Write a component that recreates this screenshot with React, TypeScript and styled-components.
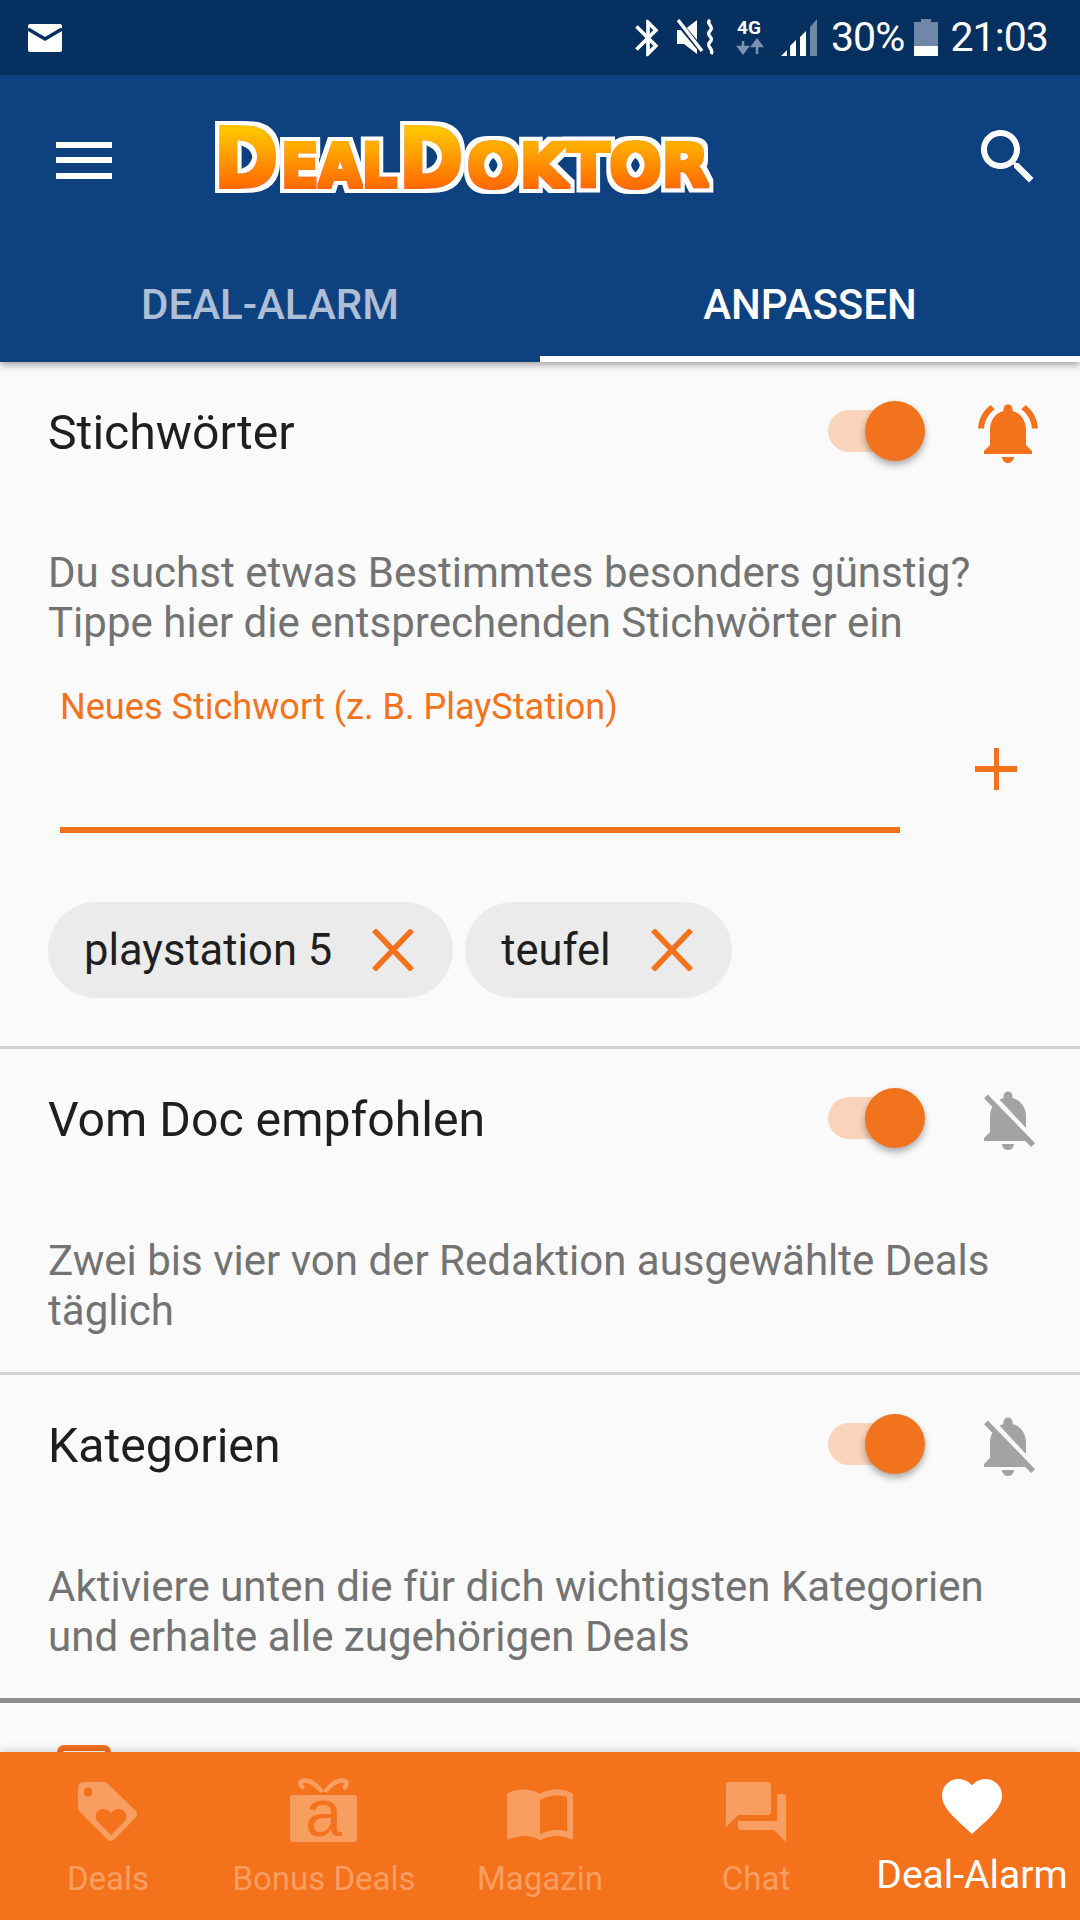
import React from "react";
import styled, { createGlobalStyle } from "styled-components";

const Global = createGlobalStyle`
  html, body { margin: 0; padding: 0; background: #fafafa; }
  * { box-sizing: border-box; }
  body { font-family: Roboto, "Noto Sans", sans-serif; }
`;

const ORANGE = "#f5721d";
const MUTED = "#f99e61";

const Page = styled.div`
  width: 1080px; height: 1920px; display: flex; flex-direction: column; overflow: hidden; background: #fafafa;
`;
const StatusBar = styled.div`
  height: 75px; flex: none; background: #06305f; display: flex; align-items: center; justify-content: space-between;
  padding: 0 32px 0 28px; color: #fff;
`;
const StatusIcons = styled.div`display: flex; align-items: center;`;
const StatusText = styled.span<{ $gap: number }>`
  font-size: 41px; line-height: 75px; letter-spacing: -0.9px; margin-left: ${p => p.$gap}px; display: block;
`;
const AppBar = styled.header`
  height: 287px; flex: none; background: #0e4180; display: flex; flex-direction: column;
  box-shadow: 0 3px 7px rgba(0,0,0,.35); position: relative; z-index: 2;
`;
const Toolbar = styled.div`
  height: 170px; flex: none; display: flex; align-items: center; padding: 0 36px 0 56px; color: #fff;
`;
const Burger = styled.div`
  width: 56px; height: 37px; flex: none; display: flex; flex-direction: column; justify-content: space-between;
  & > i { display: block; height: 6px; background: #fff; }
`;
const LogoWrap = styled.div`margin-left: 96px; flex: 1; display: flex;`;
const SearchWrap = styled.div`margin-top: -6px; flex: none;`;
const Tabs = styled.div`flex: 1; display: flex;`;
const Tab = styled.div<{ $active?: boolean }>`
  flex: 1; display: flex; align-items: center; justify-content: center; font-size: 42px; font-weight: 500;
  padding-top: 8px; color: ${p => (p.$active ? "#fff" : "#aebfd5")};
  border-bottom: 6px solid ${p => (p.$active ? "#fff" : "transparent")};
`;
const Content = styled.main`flex: 1; min-height: 0; overflow: hidden; background: #fafafa;`;
const Section = styled.section<{ $dark?: boolean; $top: number }>`
  padding: ${p => p.$top}px 0 0 48px;
  border-bottom: ${p => (p.$dark ? "5px solid #8e8e8e" : "3px solid #d3d3d3")};
`;
const Header = styled.div`display: flex; align-items: center; height: 72px; padding-right: 36px;`;
const Title = styled.h2`flex: 1; margin: 0; font-size: 48.2px; font-weight: 400; color: #1f1f1f; line-height: 72px;`;
const Switch = styled.div`
  width: 97px; height: 60px; position: relative; flex: none; margin-right: 47px; top: -2px;
  &::before { content: ""; position: absolute; left: 0; top: 9px; width: 84px; height: 42px; border-radius: 21px; background: #fad3bb; }
  &::after { content: ""; position: absolute; right: 0; top: 0; width: 60px; height: 60px; border-radius: 50%; background: #f1731d; box-shadow: 0 4px 7px rgba(0,0,0,.32); }
`;
const Body = styled.p<{ $top: number; $bottom: number }>`
  margin: ${p => p.$top}px 0 ${p => p.$bottom}px; font-size: 42.05px; line-height: 50px; color: #737373; white-space: nowrap;
`;
const InputRow = styled.div`display: flex; align-items: flex-end; padding-left: 12px; margin-top: 39px;`;
const Field = styled.div`
  width: 840px; height: 146px; border-bottom: 6px solid ${ORANGE}; color: ${ORANGE}; font-size: 36.1px; line-height: 40px;
`;
const Plus = styled.div`
  width: 42px; height: 42px; margin: 0 0 43px 75px; position: relative;
  &::before, &::after { content: ""; position: absolute; background: ${ORANGE}; }
  &::before { left: 0; right: 0; top: 18px; height: 6px; }
  &::after { top: 0; bottom: 0; left: 19px; width: 5px; }
`;
const Chips = styled.div`display: flex; gap: 12px; margin: 69px 0 48px 0;`;
const Chip = styled.div`
  height: 96px; border-radius: 48px; background: #ebebeb; display: flex; align-items: center; padding: 0 39px 0 36px; gap: 40px;
  font-size: 43.5px; color: #1f1f1f;
`;
const Stub = styled.div`
  margin: 42px 0 0 9px; width: 54px; height: 30px; border-radius: 7px; background: ${ORANGE};
  padding: 6px; & > i { display: block; height: 1px; background: #fff; }
`;
const BottomNav = styled.nav`
  height: 168px; flex: none; background: ${ORANGE}; display: grid; grid-template-columns: repeat(5, 216px);
  box-shadow: 0 -3px 8px rgba(0,0,0,.13); position: relative; z-index: 2;
`;
const NavItem = styled.div<{ $active?: boolean; $iconTop: number }>`
  position: relative; display: flex; flex-direction: column; align-items: center; padding-top: ${p => p.$iconTop}px;
  color: ${p => (p.$active ? "#fff" : MUTED)}; white-space: nowrap;
`;
const NavLabel = styled.span<{ $active?: boolean }>`
  position: absolute; left: -20px; right: -20px; text-align: center;
  top: ${p => (p.$active ? "103px" : "107px")};
  font-size: ${p => (p.$active ? "39px" : "33px")}; line-height: 40px;
`;

const Icon = ({ d, size = 72, color = "currentColor" }: { d: string; size?: number; color?: string }) => (
  <svg width={size} height={size} viewBox="0 0 24 24" fill={color} style={{ display: "block", flex: "none" }}><path d={d} /></svg>
);

const BELL_ON = "M7.58 4.08L6.15 2.65C3.75 4.48 2.17 7.3 2.03 10.5h2c.15-2.65 1.51-4.97 3.55-6.42zm12.39 6.42h2c-.15-3.2-1.73-6.02-4.12-7.85l-1.42 1.43c2.02 1.45 3.39 3.77 3.54 6.42zM18 11c0-3.07-1.64-5.64-4.5-6.32V4c0-.83-.67-1.5-1.5-1.5s-1.5.67-1.5 1.5v.68C7.63 5.36 6 7.92 6 11v5l-2 2v1h16v-1l-2-2v-5zm-6 11c.14 0 .27-.01.4-.04.65-.14 1.18-.58 1.44-1.18.1-.24.15-.5.15-.78h-4c.01 1.1.9 2 2.01 2z";
const BELL_OFF = "M20 18.69L7.84 6.14 5.27 3.49 4 4.76l2.8 2.8v.01c-.52.99-.8 2.16-.8 3.42v5l-2 2v1h13.73l2 2L21 19.72l-1-1.03zM12 22c1.11 0 2-.89 2-2h-4c0 1.11.89 2 2 2zm6-7.32V11c0-3.08-1.64-5.64-4.5-6.32V4c0-.83-.67-1.5-1.5-1.5s-1.5.67-1.5 1.5v.68c-.15.03-.29.08-.42.12-.1.03-.2.07-.3.11h-.01c-.2.08-.4.17-.59.27-.01 0-.01.01-.02.01L18 14.68z";
const SEARCH = "M15.5 14h-.79l-.28-.27C15.41 12.59 16 11.11 16 9.5 16 5.91 13.09 3 9.5 3S3 5.91 3 9.5 5.91 16 9.5 16c1.61 0 3.09-.59 4.23-1.57l.27.28v.79l5 4.99L20.49 19l-4.99-5zm-6 0C7.01 14 5 11.99 5 9.5S7.01 5 9.5 5 14 7.01 14 9.5 11.99 14 9.5 14z";
const HEART = "M12 21.35l-1.45-1.32C5.4 15.36 2 12.28 2 8.5 2 5.42 4.42 3 7.5 3c1.74 0 3.41.81 4.5 2.09C13.09 3.81 14.76 3 16.5 3 19.58 3 22 5.42 22 8.5c0 3.78-3.4 6.86-8.55 11.54L12 21.35z";
const BOOK = "M21 5c-1.11-.35-2.33-.5-3.5-.5-1.95 0-4.05.4-5.5 1.5-1.45-1.1-3.55-1.5-5.5-1.5S2.45 4.9 1 6v14.65c0 .25.25.5.5.5.1 0 .15-.05.25-.05C3.1 20.45 5.05 20 6.5 20c1.95 0 4.05.4 5.5 1.5 1.35-.85 3.8-1.5 5.5-1.5 1.65 0 3.35.3 4.75 1.05.1.05.15.05.25.05.25 0 .5-.25.5-.5V6c-.6-.45-1.25-.75-2-1zm0 13.5c-1.1-.35-2.3-.5-3.5-.5-1.7 0-4.15.65-5.5 1.5V8c1.35-.85 3.8-1.5 5.5-1.5 1.2 0 2.4.15 3.5.5v11.5z";
const CHAT = "M21 6h-2v9H6v2c0 .55.45 1 1 1h11l4 4V7c0-.55-.45-1-1-1zm-4 6V3c0-.55-.45-1-1-1H3c-.55 0-1 .45-1 1v14l4-4h10c.55 0 1-.45 1-1z";
const BT = "M17.71 7.71L12 2h-1v7.59L6.41 5 5 6.41 10.59 12 5 17.59 6.41 19 11 14.41V22h1l5.71-5.71-4.3-4.29 4.3-4.29zM13 5.83l1.88 1.88L13 9.59V5.83zm1.88 10.46L13 18.17v-3.76l1.88 1.88z";

const Envelope = () => (
  <svg width="34" height="28" viewBox="0 0 34 28" style={{ display: "block" }}>
    <rect width="34" height="28" rx="2" fill="#fff" />
    <path d="M0 5l17 10L34 5" fill="none" stroke="#06305f" strokeWidth="3.5" />
  </svg>
);
const Mute = () => (
  <svg width="40" height="37" viewBox="0 0 40 37" style={{ display: "block", marginLeft: 7 }}>
    <path d="M0 11h7L20 1v34L7 25H0z" fill="#fff" />
    <path d="M1 3l26 31" stroke="#06305f" strokeWidth="6" />
    <path d="M1 1l24 31" stroke="#fff" strokeWidth="3.5" />
    <path d="M33 1c-5 4 5 6 0 11s5 6 0 11 5 7 1 12" fill="none" stroke="#fff" strokeWidth="3.4" />
  </svg>
);
const FourG = () => (
  <svg width="30" height="37" viewBox="0 0 30 37" overflow="visible" style={{ display: "block", marginLeft: 20 }}>
    <text x="0" y="15" fontFamily="Roboto, sans-serif" fontWeight="700" fontSize="19" fill="#fff">4G</text>
    <path d="M6 22v8M1.500 28l4.500 6 4.500-6z" stroke="#7a92b0" strokeWidth="2.500" fill="#7a92b0" />
    <path d="M20 35v-10M15.500 27l4.500-6 4.500 6z" stroke="#7a92b0" strokeWidth="2.500" fill="#7a92b0" />
  </svg>
);
const Signal = () => (
  <svg width="36" height="37" viewBox="0 0 36 37" style={{ display: "block", marginLeft: 14 }}>
    <path d="M0 37l6-6v6zM9 37V27l6-6v16zM19 37V18l6-6v25z" fill="#fff" />
    <path d="M29 37V8l7-8v37z" fill="#7088a8" />
  </svg>
);
const Battery = () => (
  <svg width="24" height="37" viewBox="0 0 24 37" style={{ display: "block", marginLeft: 10 }}>
    <path d="M7 0h10v3h7v34H0V3h7z" fill="#7088a8" />
    <rect y="27" width="24" height="10" fill="#fff" />
  </svg>
);

const Logo = () => (
  <svg width="510" height="76" viewBox="0 0 510 76" overflow="visible" style={{ display: "block" }} fontFamily="'DejaVu Sans', sans-serif" fontWeight="700">
    <defs>
      <linearGradient id="lg" gradientUnits="userSpaceOnUse" x1="0" y1="6" x2="0" y2="70">
        <stop offset="0" stopColor="#ffc400" />
        <stop offset="1" stopColor="#ff6000" />
      </linearGradient>
      <filter id="fat" x="-5%" y="-20%" width="110%" height="140%">
        <feMorphology in="SourceGraphic" operator="dilate" radius="1.6" result="fill" />
        <feMorphology in="SourceAlpha" operator="dilate" radius="5.5" result="grown" />
        <feGaussianBlur in="grown" stdDeviation="0.7" result="soft" />
        <feFlood floodColor="#ffffff" />
        <feComposite in2="soft" operator="in" result="white" />
        <feMerge>
          <feMergeNode in="white" />
          <feMergeNode in="fill" />
        </feMerge>
      </filter>
    </defs>
    <g fill="url(#lg)" filter="url(#fat)">
      <text x="6" y="65" fontSize="82" textLength="64" lengthAdjust="spacingAndGlyphs">D</text>
      <text x="73" y="65" fontSize="60" textLength="116" lengthAdjust="spacingAndGlyphs">EAL</text>
      <text x="191" y="65" fontSize="82" textLength="64" lengthAdjust="spacingAndGlyphs">D</text>
      <text x="259" y="65" fontSize="60" textLength="242" lengthAdjust="spacingAndGlyphs">OKTOR</text>
    </g>
  </svg>
);

const Close = () => (
  <svg width="42" height="42" viewBox="0 0 42 42" style={{ display: "block", flex: "none" }}>
    <path d="M2 1l38 40M40 1L2 41" stroke={ORANGE} strokeWidth="5.500" fill="none" />
  </svg>
);
const Tag = () => (
  <svg width="60" height="60" viewBox="0 0 60 60" style={{ display: "block" }}>
    <path fillRule="evenodd" fill={MUTED} d="M6 0H25Q28 0 30 2L58 29Q60 32 58 35L36 58Q33 60 30 58L2 30Q0 28 0 25V6Q0 0 6 0ZM10 5.500a4.500 4.500 0 1 0 .01 0Z" />
    <path fill={ORANGE} d="M33 53L21 41C17 37 17 33 19 30 22 26 29 26 33 31 37 26 44 26 47 30 49 33 49 37 45 41Z" />
  </svg>
);
const Gift = () => (
  <svg width="68" height="64" viewBox="0 0 68 64" overflow="visible" style={{ display: "block" }}>
    <path d="M32 14C26 6 20 2.500 15 2.500 9 2.500 9 8 14 10M35 14C41 6 47 2.500 52 2.500 58 2.500 58 8 53 10" fill="none" stroke={MUTED} strokeWidth="4.500" />
    <rect y="17" width="67" height="47" rx="3" fill={MUTED} />
    <text x="33.500" y="58" textAnchor="middle" fontFamily="'Liberation Sans', sans-serif" fontSize="66" fill={ORANGE}>a</text>
  </svg>
);

export default function App() {
  return (
    <Page>
      <Global />
      <StatusBar>
        <Envelope />
        <StatusIcons>
          <Icon d={BT} size={44} color="#fff" />
          <Mute />
          <FourG />
          <Signal />
          <StatusText $gap={14}>30%</StatusText>
          <Battery />
          <StatusText $gap={12}>21:03</StatusText>
        </StatusIcons>
      </StatusBar>
      <AppBar>
        <Toolbar>
          <Burger><i /><i /><i /></Burger>
          <LogoWrap><Logo /></LogoWrap>
          <SearchWrap><Icon d={SEARCH} size={72} color="#fff" /></SearchWrap>
        </Toolbar>
        <Tabs>
          <Tab>DEAL-ALARM</Tab>
          <Tab $active>ANPASSEN</Tab>
        </Tabs>
      </AppBar>
      <Content>
        <Section $top={35}>
          <Header>
            <Title>Stichwörter</Title>
            <Switch />
            <Icon d={BELL_ON} color={ORANGE} />
          </Header>
          <Body $top={79} $bottom={0}>Du suchst etwas Bestimmtes besonders günstig?<br />Tippe hier die entsprechenden Stichwörter ein</Body>
          <InputRow>
            <Field>Neues Stichwort (z. B. PlayStation)</Field>
            <Plus />
          </InputRow>
          <Chips>
            <Chip>playstation 5<Close /></Chip>
            <Chip>teufel<Close /></Chip>
          </Chips>
        </Section>
        <Section $top={35}>
          <Header>
            <Title>Vom Doc empfohlen</Title>
            <Switch />
            <Icon d={BELL_OFF} color="#a3a3a3" />
          </Header>
          <Body $top={80} $bottom={36}>Zwei bis vier von der Redaktion ausgewählte Deals<br />täglich</Body>
        </Section>
        <Section $top={35} $dark>
          <Header>
            <Title>Kategorien</Title>
            <Switch />
            <Icon d={BELL_OFF} color="#a3a3a3" />
          </Header>
          <Body $top={80} $bottom={36}>Aktiviere unten die für dich wichtigsten Kategorien<br />und erhalte alle zugehörigen Deals</Body>
        </Section>
        <Section $top={0}>
          <Stub><i /></Stub>
        </Section>
      </Content>
      <BottomNav>
        <NavItem $iconTop={30}><Tag /><NavLabel>Deals</NavLabel></NavItem>
        <NavItem $iconTop={26}><Gift /><NavLabel>Bonus Deals</NavLabel></NavItem>
        <NavItem $iconTop={24}><Icon d={BOOK} /><NavLabel>Magazin</NavLabel></NavItem>
        <NavItem $iconTop={24}><Icon d={CHAT} /><NavLabel>Chat</NavLabel></NavItem>
        <NavItem $iconTop={18} $active><Icon d={HEART} /><NavLabel $active>Deal-Alarm</NavLabel></NavItem>
      </BottomNav>
    </Page>
  );
}
